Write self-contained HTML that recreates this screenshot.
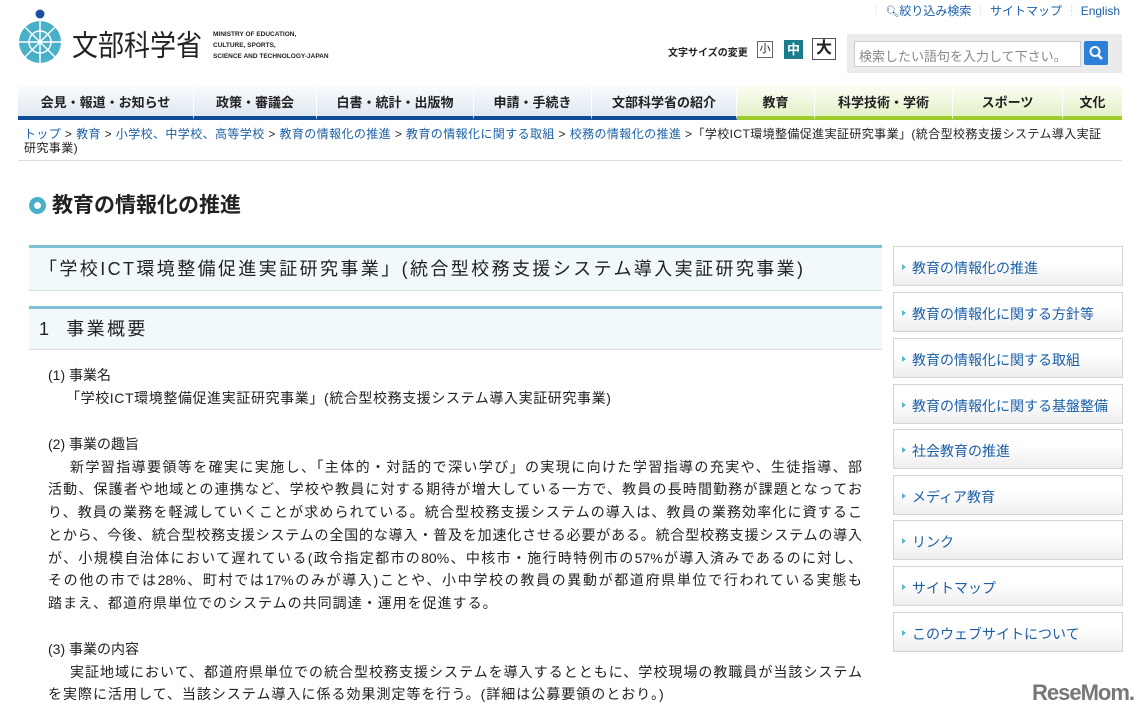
<!DOCTYPE html>
<html><head><meta charset="utf-8"><style>
*{margin:0;padding:0;box-sizing:border-box}
body{width:1143px;height:714px;overflow:hidden;background:#fff;font-family:"Liberation Sans","Noto Sans CJK JP",sans-serif;color:#222;position:relative}
a{color:#1a5fa8}
.abs{position:absolute}
.nav{position:absolute;top:86px;left:18px;width:1104px;height:34px;display:flex}
.nav div{height:34px;font-size:13px;font-weight:bold;display:flex;align-items:center;justify-content:center;border-right:1px solid #fff;color:#222}
.nb{background:linear-gradient(#fafcfe,#dfe7f0);border-bottom:4px solid #0f4c96}
.ng{background:linear-gradient(#fbfdf4,#e4f1c8);border-bottom:4px solid #9dcc2b}
.side{position:absolute;left:893px;width:230px;height:40px;border:1px solid #d4d4d4;background:linear-gradient(#fff 40%,#eeeeee);font-size:14px;padding:11px 0 0 18px}
.side a{color:#1a5fa8}
.side::before{content:"";position:absolute;left:8px;top:17px;border-left:4px solid #5bb8c9;border-top:3px solid transparent;border-bottom:3px solid transparent}
.h2{position:absolute;left:29px;width:853px;background:#f2f9fc;border-top:3px solid #7fbfd4;border-bottom:1px solid #d8dfe2;font-size:18px;color:#222;padding-left:10px;letter-spacing:2.4px}
.p{position:absolute;left:48px;width:814px;font-size:14px;line-height:22.7px;color:#222}
.j{text-align:justify;text-align-last:justify;white-space:nowrap}
</style></head><body>
<svg class="abs" style="left:17px;top:8px" width="46" height="58" viewBox="0 0 46 58">
<circle cx="23" cy="6" r="4.5" fill="#1a4f9c"/>
<circle cx="23" cy="34" r="21" fill="#49b0c8"/>
<g stroke="#fff" stroke-width="1.5"><circle cx="23" cy="34" r="11" fill="none"/>
<line x1="23" y1="13" x2="23" y2="55"/><line x1="2" y1="34" x2="44" y2="34"/><line x1="8" y1="19" x2="38" y2="49"/><line x1="38" y1="19" x2="8" y2="49"/></g></svg>
<div class="abs" style="left:72px;top:24px;font-size:26px;letter-spacing:0px;color:#222;font-family:'Noto Sans CJK JP',sans-serif;line-height:36px;transform:scaleY(1.12);transform-origin:top left">文部科学省</div>
<div class="abs" style="left:213px;top:29px;font-size:6.5px;font-weight:bold;line-height:11px;color:#222">MINISTRY OF EDUCATION,<br>CULTURE, SPORTS,<br>SCIENCE AND TECHNOLOGY-JAPAN</div>
<div class="abs" style="left:870px;top:2px;font-size:12px;color:#1a5fa8"><span style="color:#ccc">┆</span> <span style="font-size:11px">🔍︎</span>絞り込み検索 <span style="color:#ccc">┆</span> サイトマップ <span style="color:#ccc">┆</span> English</div>
<div class="abs" style="left:668px;top:44px;font-size:10px;font-weight:bold">文字サイズの変更</div>
<div class="abs" style="left:757px;top:41px;width:16px;height:17px;border:1px solid #666;font-size:11px;text-align:center;line-height:15px">小</div>
<div class="abs" style="left:784px;top:40px;width:19px;height:19px;background:#1a7c8c;color:#fff;font-weight:bold;font-size:13px;text-align:center;line-height:19px">中</div>
<div class="abs" style="left:812px;top:38px;width:24px;height:22px;border:1px solid #555;font-weight:bold;font-size:16px;text-align:center;line-height:20px">大</div>
<div class="abs" style="left:847px;top:34px;width:275px;height:39px;background:#ebebeb"></div>
<div class="abs" style="left:854px;top:41px;width:227px;height:26px;background:#fff;border:1px solid #ccc;font-size:13px;color:#888;padding:4px 0 0 4px">検索したい語句を入力して下さい。</div>
<div class="abs" style="left:1084px;top:41px;width:24px;height:24px;background:#2e7fd9;border-radius:2px"><svg width="24" height="24"><circle cx="11" cy="10.5" r="4.5" stroke="#fff" stroke-width="2" fill="none"/><line x1="14" y1="14" x2="18" y2="18" stroke="#fff" stroke-width="2.5"/></svg></div>
<div class="nav">
<div class="nb" style="width:176px">会見・報道・お知らせ</div>
<div class="nb" style="width:123px">政策・審議会</div>
<div class="nb" style="width:157px">白書・統計・出版物</div>
<div class="nb" style="width:118px">申請・手続き</div>
<div class="nb" style="width:145px">文部科学省の紹介</div>
<div class="ng" style="width:78px">教育</div>
<div class="ng" style="width:138px">科学技術・学術</div>
<div class="ng" style="width:110px">スポーツ</div>
<div class="ng" style="width:59px;border-right:0">文化</div>
</div>
<div class="abs" style="left:24px;top:127px;width:1100px;font-size:12px;line-height:14px;color:#222;letter-spacing:0.4px"><div style="white-space:nowrap"><a>トップ</a> &gt; <a>教育</a> &gt; <a>小学校、中学校、高等学校</a> &gt; <a>教育の情報化の推進</a> &gt; <a>教育の情報化に関する取組</a> &gt; <a>校務の情報化の推進</a> &gt;「学校ICT環境整備促進実証研究事業」(統合型校務支援システム導入実証</div><div>研究事業)</div></div>
<div class="abs" style="left:18px;top:160px;width:1104px;border-top:1px solid #ddd"></div>
<div class="abs" style="left:29px;top:197px;width:17px;height:17px;border-radius:50%;background:#49b0c8"></div>
<div class="abs" style="left:34px;top:202px;width:7px;height:7px;border-radius:50%;background:#fff"></div>
<div class="abs" style="left:52px;top:192px;font-size:21px;font-weight:bold;line-height:28px">教育の情報化の推進</div>
<div class="h2" style="top:245px;height:46px;line-height:42px">「学校ICT環境整備促進実証研究事業」(統合型校務支援システム導入実証研究事業)</div>
<div class="h2" style="top:306px;height:44px;line-height:40px">1&nbsp;&nbsp;事業概要</div>
<div class="p" style="top:364px">(1) 事業名<br><span style="padding-left:18px;letter-spacing:0.6px">「学校ICT環境整備促進実証研究事業」(統合型校務支援システム導入実証研究事業)</span></div>
<div class="p" style="top:433px">(2) 事業の趣旨
<div class="j" style="padding-left:22px">新学習指導要領等を確実に実施し、「主体的・対話的で深い学び」の実現に向けた学習指導の充実や、生徒指導、部</div>
<div class="j">活動、保護者や地域との連携など、学校や教員に対する期待が増大している一方で、教員の長時間勤務が課題となってお</div>
<div class="j">り、教員の業務を軽減していくことが求められている。統合型校務支援システムの導入は、教員の業務効率化に資するこ</div>
<div class="j">とから、今後、統合型校務支援システムの全国的な導入・普及を加速化させる必要がある。統合型校務支援システムの導入</div>
<div class="j">が、小規模自治体において遅れている(政令指定都市の80%、中核市・施行時特例市の57%が導入済みであるのに対し、</div>
<div class="j">その他の市では28%、町村では17%のみが導入)ことや、小中学校の教員の異動が都道府県単位で行われている実態も</div>
<div style="letter-spacing:1px">踏まえ、都道府県単位でのシステムの共同調達・運用を促進する。</div>
</div>
<div class="p" style="top:638px">(3) 事業の内容
<div class="j" style="padding-left:22px">実証地域において、都道府県単位での統合型校務支援システムを導入するとともに、学校現場の教職員が当該システム</div>
<div style="letter-spacing:1px">を実際に活用して、当該システム導入に係る効果測定等を行う。(詳細は公募要領のとおり。)</div>
</div>
<div class="side" style="top:246px"><a>教育の情報化の推進</a></div>
<div class="side" style="top:292px"><a>教育の情報化に関する方針等</a></div>
<div class="side" style="top:338px"><a>教育の情報化に関する取組</a></div>
<div class="side" style="top:384px"><a>教育の情報化に関する基盤整備</a></div>
<div class="side" style="top:429px"><a>社会教育の推進</a></div>
<div class="side" style="top:475px"><a>メディア教育</a></div>
<div class="side" style="top:520px"><a>リンク</a></div>
<div class="side" style="top:566px"><a>サイトマップ</a></div>
<div class="side" style="top:612px"><a>このウェブサイトについて</a></div>
<div class="abs" style="left:1032px;top:680px;font-size:22px;font-weight:bold;color:#777;letter-spacing:-1px">ReseMom.</div>
</body></html>
